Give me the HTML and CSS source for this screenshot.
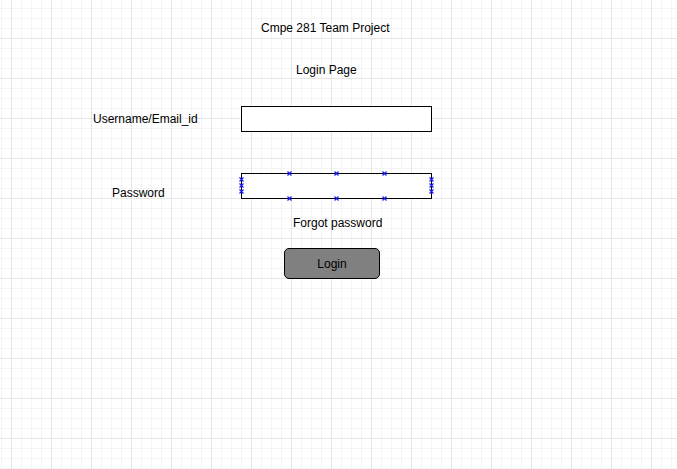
FILE: index.html
```html
<!DOCTYPE html>
<html lang="en">
<head>
<meta charset="utf-8">
<title>Cmpe 281 Team Project</title>
<link rel="stylesheet" href="styles.css">
</head>
<body>
<main class="page">
  <div class="title">Cmpe 281 Team Project</div>
  <div class="subtitle">Login Page</div>
  <div class="row row-user">
    <label class="label label-user">Username/Email_id</label>
    <div class="field"></div>
  </div>
  <div class="row row-pass">
    <label class="label label-pass">Password</label>
    <div class="field selected">
      <svg class="mk mk-t1" viewBox="0 0 5 5"><path d="M0.5 0.5L4.5 4.5M4.5 0.5L0.5 4.5"/></svg>
      <svg class="mk mk-t2" viewBox="0 0 5 5"><path d="M0.5 0.5L4.5 4.5M4.5 0.5L0.5 4.5"/></svg>
      <svg class="mk mk-t3" viewBox="0 0 5 5"><path d="M0.5 0.5L4.5 4.5M4.5 0.5L0.5 4.5"/></svg>
      <svg class="mk mk-b1" viewBox="0 0 5 5"><path d="M0.5 0.5L4.5 4.5M4.5 0.5L0.5 4.5"/></svg>
      <svg class="mk mk-b2" viewBox="0 0 5 5"><path d="M0.5 0.5L4.5 4.5M4.5 0.5L0.5 4.5"/></svg>
      <svg class="mk mk-b3" viewBox="0 0 5 5"><path d="M0.5 0.5L4.5 4.5M4.5 0.5L0.5 4.5"/></svg>
      <svg class="mk mk-l1" viewBox="0 0 5 5"><path d="M0.5 0.5L4.5 4.5M4.5 0.5L0.5 4.5"/></svg>
      <svg class="mk mk-l2" viewBox="0 0 5 5"><path d="M0.5 0.5L4.5 4.5M4.5 0.5L0.5 4.5"/></svg>
      <svg class="mk mk-l3" viewBox="0 0 5 5"><path d="M0.5 0.5L4.5 4.5M4.5 0.5L0.5 4.5"/></svg>
      <svg class="mk mk-r1" viewBox="0 0 5 5"><path d="M0.5 0.5L4.5 4.5M4.5 0.5L0.5 4.5"/></svg>
      <svg class="mk mk-r2" viewBox="0 0 5 5"><path d="M0.5 0.5L4.5 4.5M4.5 0.5L0.5 4.5"/></svg>
      <svg class="mk mk-r3" viewBox="0 0 5 5"><path d="M0.5 0.5L4.5 4.5M4.5 0.5L0.5 4.5"/></svg>
    </div>
  </div>
  <div class="forgot">Forgot password</div>
  <div class="btn">Login</div>
</main>
</body>
</html>
```
FILE: styles.css
```css
html, body {
  margin: 0;
  padding: 0;
}
body {
  width: 677px;
  height: 469px;
  overflow: hidden;
  font-family: "Liberation Sans", Arial, sans-serif;
  font-size: 12px;
  line-height: 14px;
  color: #000;
  background-color: #fff;
  background-image:
    linear-gradient(to right, #e6e6e6 1px, transparent 1px),
    linear-gradient(to bottom, #e6e6e6 1px, transparent 1px),
    linear-gradient(to right, #f4f4f4 1px, transparent 1px),
    linear-gradient(to bottom, #f4f4f4 1px, transparent 1px);
  background-size: 40px 40px, 40px 40px, 10px 10px, 10px 10px;
  background-position: 11px 38px, 11px 38px, 1px 8px, 1px 8px;
}
.page {
  display: flex;
  flex-direction: column;
  align-items: flex-start;
  padding-top: 21px;
}
.title {
  margin-left: 261px;
}
.subtitle {
  margin-top: 28px;
  margin-left: 296px;
}
.row {
  display: flex;
}
.row-user {
  margin-top: 29px;
  align-items: center;
}
.row-pass {
  margin-top: 41px;
  align-items: flex-end;
}
.label {
  width: 241px;
  box-sizing: border-box;
}
.label-user {
  padding-left: 93px;
}
.label-pass {
  padding-left: 112px;
  margin-bottom: -1px;
}
.field {
  width: 189px;
  height: 24px;
  border: 1px solid #000;
  background: #fff;
}
.selected {
  position: relative;
}
.mk {
  position: absolute;
  width: 5px;
  height: 5px;
  fill: none;
  stroke: #1a1aff;
  stroke-width: 1.2;
}
.mk-t1, .mk-t2, .mk-t3 { top: -3px; }
.mk-b1, .mk-b2, .mk-b3 { bottom: -3px; }
.mk-t1, .mk-b1 { left: 45px; }
.mk-t2, .mk-b2 { left: 92px; }
.mk-t3, .mk-b3 { left: 140px; }
.mk-l1, .mk-l2, .mk-l3 { left: -3px; }
.mk-r1, .mk-r2, .mk-r3 { right: -3px; }
.mk-l1, .mk-r1 { top: 3px; }
.mk-l2, .mk-r2 { top: 9px; }
.mk-l3, .mk-r3 { top: 15px; }
.forgot {
  margin-top: 17px;
  margin-left: 293px;
}
.btn {
  margin-top: 18px;
  margin-left: 284px;
  width: 94px;
  height: 29px;
  border: 1px solid #000;
  border-radius: 5px;
  background: #808080;
  display: flex;
  align-items: center;
  justify-content: center;
}
```
